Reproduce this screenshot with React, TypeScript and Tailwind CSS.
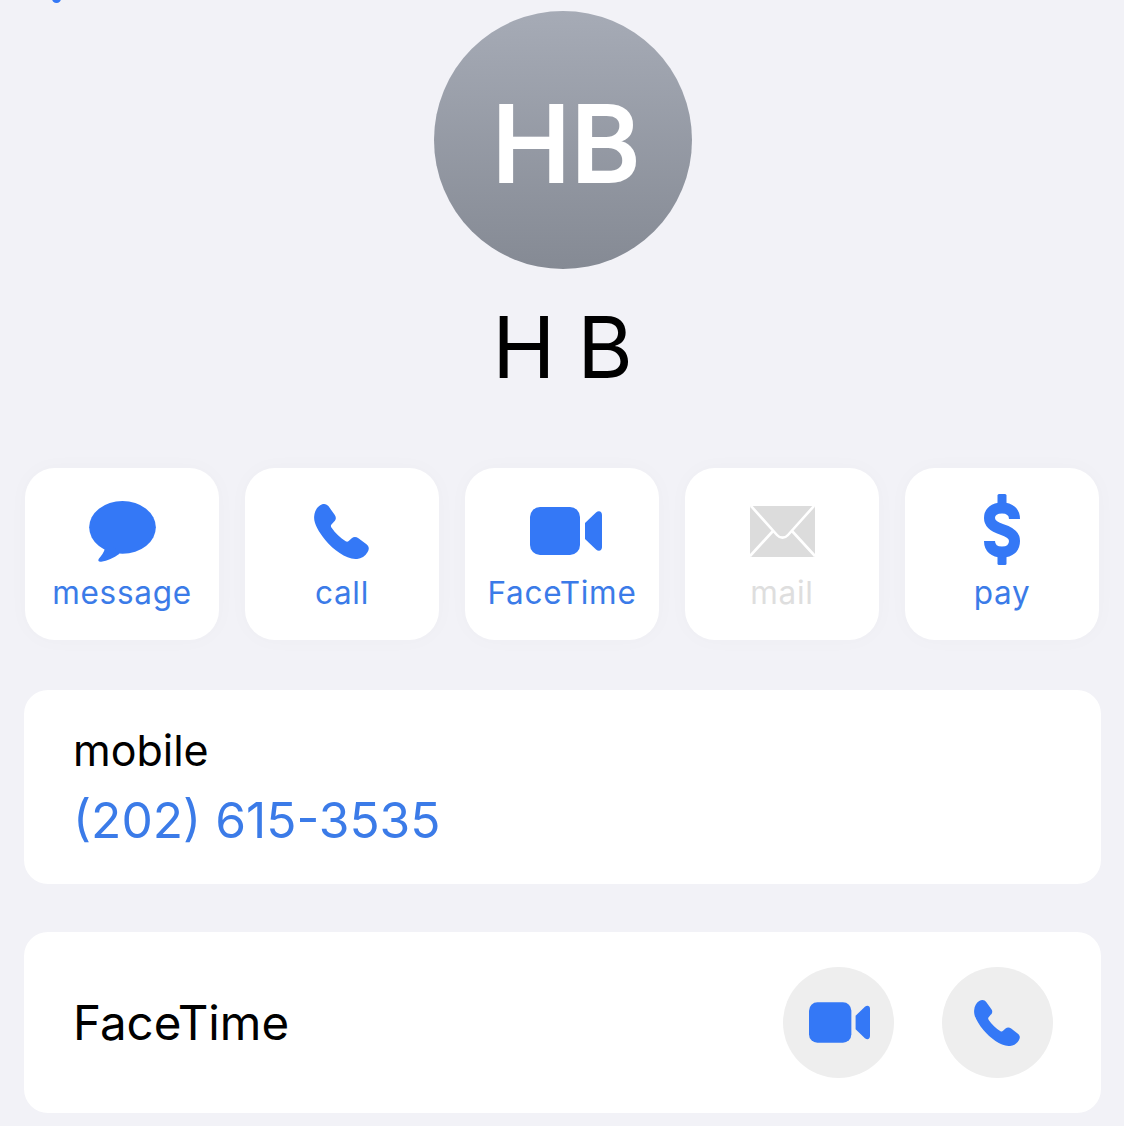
import React from "react";

const BLUE = "#3478F6";

function Phone({ className }: { className: string }) {
  return (
    <svg viewBox="942 133 163 164" className={className} fill={BLUE}>
      <path d="M960 137C970 130 980 133 985 140L1003 165C1009 173 1007 180 1001 186L993 195C991 198 992 201 994 204C1005 220 1020 235 1036 244C1039 246 1042 246 1045 243L1054 235C1060 230 1067 230 1074 235L1098 253C1106 259 1107 268 1101 277C1093 290 1080 298 1065 297C1035 295 1000 270 975 240C955 215 940 190 942 170C943 155 950 143 960 137Z" />
    </svg>
  );
}

function Video({ className }: { className: string }) {
  return (
    <svg viewBox="0 0 72 48" className={className} fill={BLUE}>
      <rect x="0" y="0" width="50" height="48" rx="10" />
      <path d="M55 16L66 5.5C69 3 72 4.5 72 8L72 40C72 43.5 69 45 66 42.5L55 32Z" />
    </svg>
  );
}

function Bubble() {
  return (
    <svg viewBox="267 123 200 183" className="w-[67px] h-[61px]" fill={BLUE}>
      <ellipse cx="367" cy="202" rx="100" ry="79" />
      <path d="M315 262C312 278 303 288 296 296C292 302 296 306 303 305C322 302 340 294 358 281L340 262Z" />
    </svg>
  );
}

function Mail() {
  return (
    <svg viewBox="0 0 65 51" className="w-[65px] h-[51px]">
      <rect width="65" height="51" rx="2" fill="#DCDCDC" />
      <path d="M1 0L27 29C30 32.5 35 32.5 38 29L64 0M0 50L23 25M65 50L42 25" fill="none" stroke="#fff" strokeWidth="2.6" />
    </svg>
  );
}

function Dollar() {
  return (
    <svg viewBox="0 0 36 71" className="w-[36px] h-[71px] mt-[-4px]" fill={BLUE}>
      <rect x="13.5" y="0" width="9" height="15" rx="1.5" />
      <rect x="13.5" y="56" width="9" height="15" rx="1.5" />
      <path
        d="M30.5 25C30.5 18 26 14 18 14C10 14 5.5 18 5.5 24C5.5 30 10 33 18 35.5C26 38 30.5 41 30.5 47C30.5 54 26 58 18 58C10 58 5.5 54 5.5 47"
        fill="none"
        stroke={BLUE}
        strokeWidth="11"
      />
    </svg>
  );
}

function Action({ label, icon, disabled }: { label: string; icon: React.ReactNode; disabled?: boolean }) {
  return (
    <div className="w-[194px] h-[172px] bg-white rounded-[30px] shadow-[0_0_22px_rgba(0,0,0,0.025)] flex flex-col items-center">
      <div className="h-[108px] flex items-center justify-center pt-[18px]">{icon}</div>
      <div className={`text-[31.5px] leading-[34px] tracking-[0.7px] ${disabled ? "text-[#DEDEDE]" : "text-[#3B7BE8]"}`}>{label}</div>
    </div>
  );
}

export default function App() {
  return (
    <div
      className="relative h-[1126px] w-[1124px] overflow-hidden bg-[#F2F2F7] pt-[11px] text-black"
      style={{ fontFamily: "Inter, 'Noto Sans', sans-serif" }}
    >
      <div className="absolute left-[52px] top-[-6px] h-[9px] w-[9px] rounded-full bg-[#3478F6]" />
      <div className="ml-[434px] w-[258px] h-[258px] rounded-full bg-gradient-to-b from-[#A6ABB6] to-[#858A94] flex items-center justify-center pl-[6px] pt-[8px] text-white text-[106px] font-medium leading-none [-webkit-text-stroke:2px_white] [stroke-linejoin:round]">
        HB
      </div>
      <div className="mt-[29px] h-[100px] text-center text-[85px] leading-[100px] font-normal tracking-[-1px]">H B</div>
      <div className="mt-[70px] px-[25px] flex gap-[26px]">
        <Action label="message" icon={<Bubble />} />
        <Action label="call" icon={<Phone className="w-[55px] h-[55px] mr-[2px]" />} />
        <Action label="FaceTime" icon={<Video className="w-[72px] h-[48px] ml-[8px]" />} />
        <Action label="mail" icon={<Mail />} disabled />
        <Action label="pay" icon={<Dollar />} />
      </div>
      <div className="mt-[50px] mx-[24px] w-[1077px] h-[194px] bg-white rounded-[24px] pl-[49px] pt-[34px]">
        <div className="text-[43px] leading-[52px]">mobile</div>
        <div className="mt-[14px] text-[49.7px] leading-[60px] text-[#3B7BE8]">(202) 615-3535</div>
      </div>
      <div className="mt-[48px] mx-[24px] w-[1077px] h-[181px] bg-white rounded-[24px] pl-[49px] pr-[48px] flex items-center justify-between">
        <div className="text-[47.5px] leading-[60px]">FaceTime</div>
        <div className="flex gap-[48px]">
          <div className="w-[111px] h-[111px] rounded-full bg-[#EEEEEE] flex items-center justify-center">
            <Video className="w-[61px] h-[41px] ml-[2px]" />
          </div>
          <div className="w-[111px] h-[111px] rounded-full bg-[#EEEEEE] flex items-center justify-center">
            <Phone className="w-[46px] h-[46px] mr-[1px]" />
          </div>
        </div>
      </div>
    </div>
  );
}
